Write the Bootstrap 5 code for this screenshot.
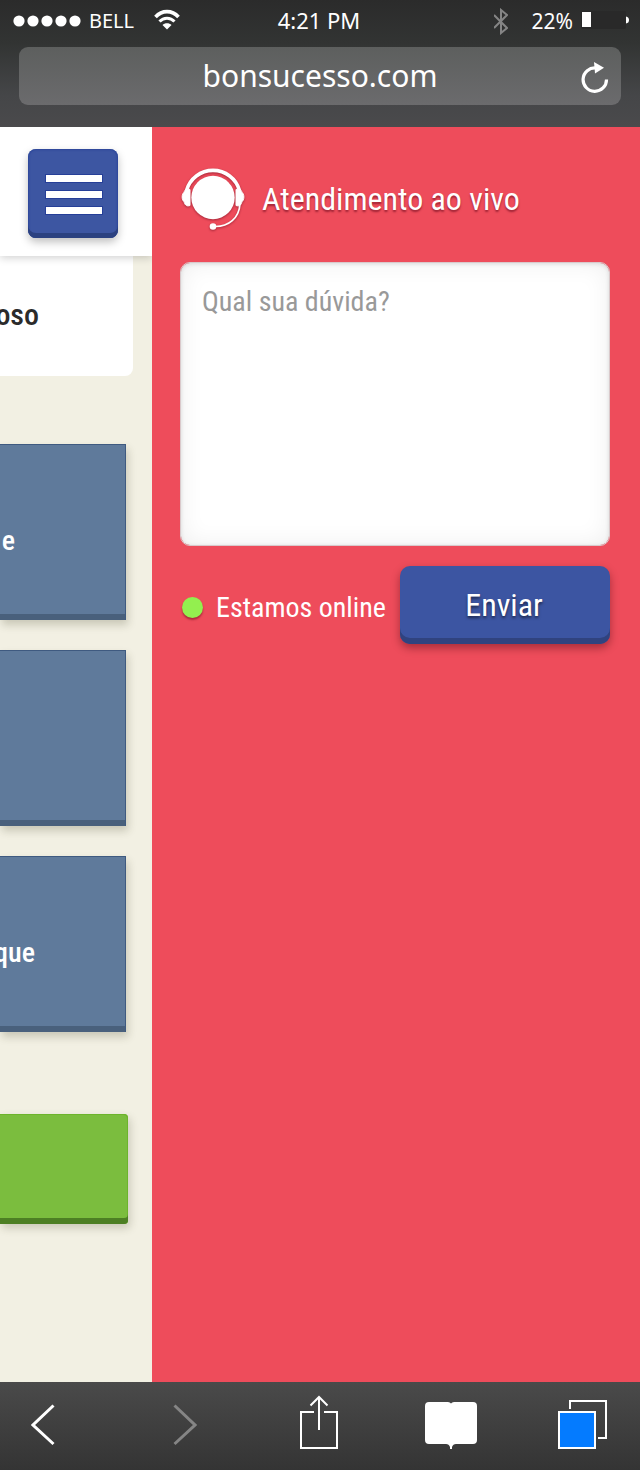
<!DOCTYPE html>
<html lang="pt-BR">
<head>
<meta charset="utf-8">
<meta name="viewport" content="width=device-width, initial-scale=1">
<title>Bonsucesso - Atendimento ao vivo</title>
<link rel="stylesheet" href="https://cdn.jsdelivr.net/npm/bootstrap@5.3.0/dist/css/bootstrap.min.css">
<style>
  :root { --condensed: "Roboto Condensed", "Liberation Sans Narrow", "Open Sans Condensed", Roboto, sans-serif; }
  body { font-family: var(--condensed); background: #ee4c5b; }
  svg { display: block; }

  /* browser chrome */
  .browser-top { background: linear-gradient(#2b2b2b, #323433 34%, #454648 75%, #4a4a4c); color: #fff; font-family: "Noto Sans", "Open Sans", sans-serif; padding: 0 19px 22px; }
  .status-line { display: grid; grid-template-columns: 1fr auto 1fr; height: 47px; font-size: 21px; line-height: 42px; margin: 0 -8px 0 -10px; }
  .status-line > div { height: 42px; }
  .clock { font-size: 22px; line-height: 40px; }
  .carrier { font-size: 20px; }
  .address-input { height: 58px; border: 0; border-radius: 9px; background: linear-gradient(#5d5f5e, #6b6b6d); color: #fff; font-size: 30px; text-align: center; padding: 0 48px 2px; }
  .reload-btn { right: 12px; top: 14px; }
  .browser-bottom { display: grid; grid-template-columns: 114fr 142fr 126fr 138fr 120fr; height: 88px; padding-bottom: 2px; background: linear-gradient(#4a4a4a, #343434); }
  .plain-btn { border: 0; background: none; padding: 0; }
  .first-btn { padding-left: 31px; }
  .last-btn { padding-right: 33px; }

  /* page pushed aside by the panel */
  .pushed-page { flex: 0 0 152px; background: #f2f0e3; }
  .page-header { height: 129px; background: #fff; box-shadow: 0 2px 8px rgba(0,0,0,.18); padding: 22px 34px 0 0; }
  .menu-btn { width: 90px; height: 89px; gap: 9px; border: 0; border-radius: 8px; background: #3d56a2; box-shadow: inset 0 -5px #2b4180, inset 0 0 2px 1px #2c469a, 0 4px 8px rgba(0,0,0,.25); padding: 2px 16px 0 18px; }
  .menu-bar { height: 7px; background: #fff; box-shadow: 0 0 0 1px #263f98; }
  .cut-text { display: flex; justify-content: flex-end; white-space: nowrap; }
  .info-card { width: 133px; height: 120px; background: #fff; border-radius: 0 0 8px 0; color: #2b2b2b; font-size: 30px; font-weight: 500; line-height: 118px; padding-right: 94px; }
  .tile-stack { margin-top: 68px; gap: 30px; }
  .side-tile { width: 126px; height: 176px; background: #5f7a9b; color: #fff; font-size: 28px; font-weight: 500; line-height: 36px; padding: 79px 91px 0 0; text-decoration: none;
    box-shadow: inset -1px 1px #3f5a80, inset 0 -6px #49607c, 2px 5px 8px rgba(60,60,30,.22); }
  .short-line { padding-right: 111px; }
  .green-tile { width: 128px; height: 110px; margin-top: 82px; border: 0; border-radius: 0 4px 4px 0; background: #7bbd3e; box-shadow: inset 0 -6px #4d7f24, inset -1px 1px #6db42c, 2px 4px 8px rgba(60,60,30,.22); }

  /* live support panel */
  .chat-panel { min-width: 0; background: #ee4c5b; color: #fff; padding: 40px 30px 0 28px; }
  .panel-head { margin-bottom: 31px; }
  .panel-title { font-size: 32px; line-height: 40px; text-shadow: 0 2px 2px rgba(90,0,20,.55); }
  .soft-shadow { filter: drop-shadow(0 1px 1px rgba(90,0,20,.5)); }
  .question-box { height: 284px; resize: none; border: 1px solid #d9c9cb; border-radius: 10px; padding: 18px 21px; font-size: 28px; line-height: 42px; box-shadow: inset 0 0 24px rgba(0,0,0,.07), inset 0 1px 4px rgba(0,0,0,.12); }
  .question-box::placeholder { color: #999; }
  .send-row { margin-top: 20px; }
  .online-dot { width: 21px; height: 21px; border-radius: 50%; background: #93ef4f; box-shadow: 0 2px 2px rgba(90,0,20,.45); }
  .online-status { gap: 13px; padding: 5px 0 0 2px; }
  .online-text { font-size: 28px; line-height: 36px; }
  .send-btn { width: 210px; height: 78px; border: 0; border-radius: 10px; background: #3c55a2; color: #fff; font-size: 32px; padding: 0 2px 1px 0; text-shadow: 0 2px 3px rgba(0,0,0,.55); box-shadow: inset 0 -6px #30437f, 0 4px 8px rgba(60,0,10,.4); }
</style>
</head>
<body>
<div class="d-flex flex-column min-vh-100">
  <header class="browser-top">
    <div class="status-line">
      <div class="d-flex align-items-center ps-1">
        <svg class="me-2" width="68" height="12" viewBox="0 0 68 12" fill="#fff" aria-hidden="true"><circle cx="6" cy="6" r="5.600"/><circle cx="20" cy="6" r="5.600"/><circle cx="34" cy="6" r="5.600"/><circle cx="48" cy="6" r="5.600"/><circle cx="62" cy="6" r="5.600"/></svg>
        <span class="carrier">BELL</span>
        <svg class="ms-3 me-auto" width="30" height="24" viewBox="-4 -1 30 24" fill="none" stroke="#fff" aria-label="Wi-Fi"><path d="M1.500 7C8-.2 18-.2 24.500 7" stroke-width="3.600"/><path d="M5.500 11.500c4.200-4.500 10.800-4.500 15 0" stroke-width="3"/><path d="M13 19.500l-4.500-4.600c2.200-2.200 6.800-2.200 9 0z" fill="#fff" stroke="none"/></svg>
      </div>
      <div class="clock">4:21 PM</div>
      <div class="d-flex align-items-center justify-content-end">
        <svg class="me-4" width="14" height="27" viewBox="1 1 14 27" fill="none" stroke="#858585" stroke-width="2" aria-label="Bluetooth"><path d="M1 8l13 13-6 5V3l6 5L1 21"/></svg>
        <span class="me-2">22%</span>
        <svg width="48" height="20" viewBox="0 1 48 20" aria-label="Bateria"><rect x="0" y="1" width="45" height="18" rx="2" fill="#292929"/><rect x="1" y="2" width="9" height="15" fill="#fff"/><path d="M45 6.500q3 .5 3 3.500t-3 3.500z" fill="#fff"/></svg>
      </div>
    </div>
    <div class="position-relative">
      <input class="address-input w-100 d-block" type="text" value="bonsucesso.com" aria-label="Endereço">
      <button class="plain-btn reload-btn position-absolute" type="button" aria-label="Recarregar">
        <svg width="28" height="32" viewBox="0 0 28 32" fill="none" stroke="#fff" stroke-width="3.200"><path d="M25.500 18.500A11.700 11.700 0 1 1 15 7"/><path d="M13 1l10 5.800L14 12.500z" fill="#fff" stroke="none"/></svg>
      </button>
    </div>
  </header>

  <main class="d-flex flex-grow-1">
    <section class="pushed-page overflow-hidden" aria-label="Página">
      <div class="page-header position-relative d-flex justify-content-end">
        <button class="menu-btn d-flex flex-column justify-content-center" type="button" aria-label="Menu">
          <span class="menu-bar w-100"></span><span class="menu-bar w-100"></span><span class="menu-bar w-100"></span>
        </button>
      </div>
      <div class="info-card cut-text">oso</div>
      <div class="tile-stack d-flex flex-column">
        <a class="side-tile cut-text short-line" href="#">e</a>
        <a class="side-tile" href="#" aria-label="Serviço"></a>
        <a class="side-tile cut-text" href="#">que</a>
      </div>
      <button class="green-tile d-block" type="button" aria-label="Continuar"></button>
    </section>

    <aside class="chat-panel flex-grow-1">
      <div class="panel-head d-flex align-items-center">
        <svg class="soft-shadow me-3" width="66" height="64" viewBox="0 0 66 64" fill="none" stroke="#fff" aria-hidden="true"><circle cx="33" cy="30.500" r="21.700" fill="#fff" stroke="none"/><path d="M6.500 23.500A27.500 27.500 0 0 1 59.500 23.500" stroke-width="3.600"/><path d="M10 22.500v16C6 40 4.500 37 4 34.500 1.500 33.500 1.500 26.500 4 25.500 4.500 22.500 7 21.500 10 22.500zM56 22.500v16c4 1.500 5.500-1.500 6-4 2.500-1 2.500-8 0-9-.5-3-3-4-6-3z" fill="#fff" stroke-width="1"/><path d="M60 37c-1 14-11 23-26 22.500" stroke-width="1.700"/><circle cx="33" cy="59.500" r="3.300" fill="#fff" stroke="none"/></svg>
        <h1 class="panel-title fw-normal mb-0">Atendimento ao vivo</h1>
      </div>
      <form>
        <textarea class="question-box form-control" placeholder="Qual sua dúvida?" aria-label="Qual sua dúvida?"></textarea>
        <div class="send-row d-flex align-items-center justify-content-between">
          <div class="online-status d-flex align-items-center text-nowrap">
            <span class="online-dot"></span>
            <span class="online-text">Estamos online</span>
          </div>
          <button class="send-btn" type="button">Enviar</button>
        </div>
      </form>
    </aside>
  </main>

  <nav class="browser-bottom" aria-label="Navegador">
    <button class="plain-btn first-btn d-flex align-items-center" type="button" aria-label="Voltar"><svg width="24" height="42" viewBox="0 0 24 42" fill="none" stroke="#fff" stroke-width="3"><path d="M22.500 1.500L2 21l20.500 19"/></svg></button>
    <button class="plain-btn d-flex align-items-center justify-content-center" type="button" aria-label="Avançar"><svg width="24" height="42" viewBox="0 0 24 42" fill="none" stroke="#858585" stroke-width="3"><path d="M1.500 1.500L22 21 1.500 40"/></svg></button>
    <button class="plain-btn d-flex align-items-center justify-content-center" type="button" aria-label="Compartilhar"><svg width="38" height="60" viewBox="0 0 38 60" fill="none" stroke="#fff" stroke-width="2"><path d="M14 17H1v36h36V17H24"/><path d="M19 35V3M10.500 10.500L19 2l8.500 8.500"/></svg></button>
    <button class="plain-btn d-flex align-items-center justify-content-center" type="button" aria-label="Favoritos"><svg width="52" height="47" viewBox="0 0 52 47" fill="#fff"><path d="M4 0h19q2 0 3 1.500Q27 0 29 0h19q4 0 4 4v34q0 4-4 4H31q-3 0-4 3v2h-2V45q-1-3-4-3H4q-4 0-4-4V4q0-4 4-4z"/></svg></button>
    <button class="plain-btn last-btn d-flex align-items-center justify-content-end" type="button" aria-label="Abas"><svg width="49" height="51" viewBox="0 0 49 51" fill="none" stroke="#fff" stroke-width="2"><rect x="1" y="12" width="36" height="36" fill="#047bff"/><path d="M12 9V1h36v37h-8"/></svg></button>
  </nav>
</div>
<script src="https://cdn.jsdelivr.net/npm/bootstrap@5.3.0/dist/js/bootstrap.bundle.min.js"></script>
</body>
</html>
